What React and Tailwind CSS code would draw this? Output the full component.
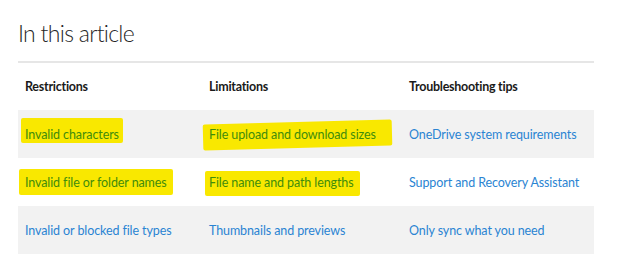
import React from "react";

const rows = [
  [
    { t: "Invalid characters", h: "left-[3px] top-[8px] w-[102px] h-[25px]" },
    { t: "File upload and download sizes", h: "left-[1px] top-[12px] w-[189px] h-[26px] -rotate-[1.5deg]" },
    { t: "OneDrive system requirements" },
  ],
  [
    { t: "Invalid file or folder names", h: "left-[1px] top-[11px] w-[154px] h-[26px]" },
    { t: "File name and path lengths", h: "left-[3px] top-[13px] w-[155px] h-[25px]" },
    { t: "Support and Recovery Assistant" },
  ],
  [
    { t: "Invalid or blocked file types" },
    { t: "Thumbnails and previews" },
    { t: "Only sync what you need" },
  ],
];

const widths = ["w-[184px]", "w-[200px]", "w-[192px]"];

export default function App() {
  return (
    <div className="w-[627px] h-[255px] bg-white pl-[18px] overflow-hidden" style={{ fontFamily: "Lato, 'Open Sans', sans-serif" }}>
      <h2 className="pt-[18px] h-[61px] text-[23px] tracking-[-0.7px] font-light text-[#262626] leading-[30px]">In this article</h2>
      <div className="w-[576px] border-t-2 border-[#e6e6e6]">
        <div className="flex h-[47px] items-center pt-[2px] text-[12.5px] tracking-[-0.25px] font-bold text-[#1a1a1a]">
          <div className={`${widths[0]} pl-[7px]`}>Restrictions</div>
          <div className={`${widths[1]} pl-[7px]`}>Limitations</div>
          <div className={`${widths[2]} pl-[7px]`}>Troubleshooting tips</div>
        </div>
        {rows.map((r, i) => (
          <div key={i} className={`flex h-[48px] text-[12.5px] tracking-[-0.1px] ${i % 2 === 0 ? "bg-[#f2f2f2]" : "bg-white"}`}>
            {r.map((c, j) => (
              <div key={j} className={`${widths[j]} relative flex items-center pl-[7px] pt-[3px]`}>
                {c.h && <span className={`absolute bg-[#f9e800] rounded-[2px] ${c.h}`} />}
                <span className={`relative ${c.h ? "text-[#3f8c0c]" : "text-[#2a84d2]"}`}>{c.t}</span>
              </div>
            ))}
          </div>
        ))}
      </div>
    </div>
  );
}
